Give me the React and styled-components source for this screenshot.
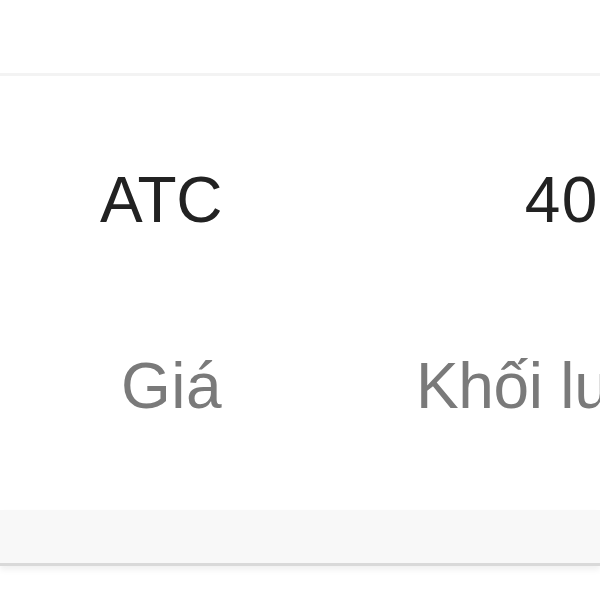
import React from "react";
import styled, { createGlobalStyle } from "styled-components";

const GlobalStyle = createGlobalStyle`
  html, body {
    margin: 0;
    padding: 0;
    background: #ffffff;
    overflow: hidden;
  }
  body {
    font-family: "Liberation Sans", Arial, sans-serif;
  }
`;

const Page = styled.div`
  width: 600px;
  height: 600px;
  overflow: hidden;
  background: #ffffff;
`;

const TopBar = styled.div`
  height: 73px;
  background: #ffffff;
`;

const Card = styled.div`
  width: 760px;
  border-top: 3px solid #f3f3f3;
  background: #ffffff;
`;

const Row = styled.div`
  display: grid;
  grid-template-columns: 222px 507px;
  padding: ${p => p.$top}px 0 ${p => p.$bottom}px;
`;

const Cell = styled.div`
  text-align: right;
  font-size: 64px;
  line-height: 64px;
  white-space: nowrap;
  letter-spacing: ${p => p.$spacing}px;
  color: ${p => (p.$label ? "#7a7a7a" : "#222222")};
`;

const Band = styled.div`
  height: 53px;
  background: #f8f8f8;
  border-bottom: 3px solid #d9d9d9;
  box-shadow: 0 4px 6px rgba(0, 0, 0, 0.06);
`;

const rows = [
  {
    cells: [
      { text: "ATC", spacing: -0.4 },
      { text: "40,000", spacing: 1.4 }
    ],
    label: false,
    top: 92,
    bottom: 61
  },
  {
    cells: [
      { text: "Giá", spacing: 0.5 },
      { text: "Khối lượng", spacing: -0.3 }
    ],
    label: true,
    top: 61,
    bottom: 92
  }
];

export default function App() {
  return (
    <Page>
      <GlobalStyle />
      <TopBar />
      <Card>
        {rows.map((row, i) => (
          <Row key={i} $top={row.top} $bottom={row.bottom}>
            {row.cells.map(c => (
              <Cell key={c.text} $label={row.label} $spacing={c.spacing}>
                {c.text}
              </Cell>
            ))}
          </Row>
        ))}
      </Card>
      <Band />
    </Page>
  );
}
